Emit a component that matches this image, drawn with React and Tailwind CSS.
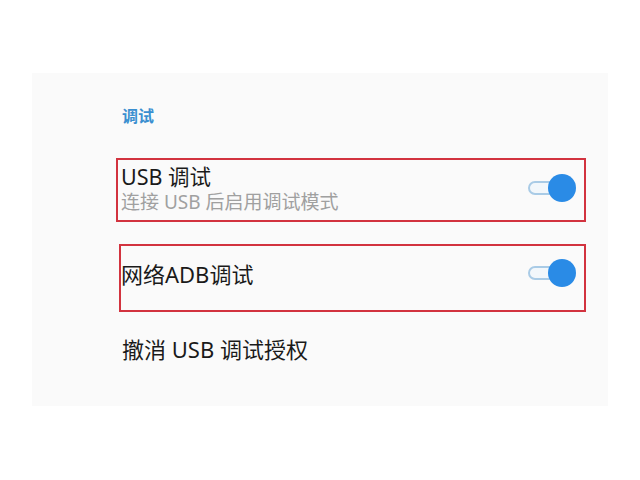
export default function App() {
  const font = { fontFamily: '"Noto Sans", "Noto Sans CJK SC", sans-serif' };
  const Toggle = () => (
    <div className="relative w-[48px] h-[28px] flex items-center">
      <div className="absolute left-[0px] top-[7px] w-[40px] h-[14px] rounded-full border-2 border-[#a9cbe6] bg-[#f2f7fb]" />
      <div className="absolute left-[20px] top-[0px] w-[28px] h-[28px] rounded-full bg-[#2a8be6]" />
    </div>
  );
  return (
    <div className="w-[640px] h-[480px] bg-white" style={font}>
      <div className="h-[73px]" />
      <div className="ml-[32px] w-[576px] h-[333px] bg-[#fafafa] flex flex-col">
        <div className="ml-[90px] mt-[33px] text-[16px] leading-[20px] font-bold text-[#3a8fd0]">调试</div>
        <div className="ml-[84px] mt-[32px] w-[470px] h-[64px] border-2 border-[#d2333f] flex items-center pl-[3px] pr-[8px]">
          <div className="flex-1 flex flex-col -mt-[3px]">
            <div className="text-[21.5px] leading-[27px] text-[#1a1a1a]">USB 调试</div>
            <div className="text-[19px] leading-[24px] text-[#a0a0a0]">连接 USB 后启用调试模式</div>
          </div>
          <div className="-mt-[4px]"><Toggle /></div>
        </div>
        <div className="ml-[87px] mt-[22px] w-[467px] h-[68px] border-2 border-[#d2333f] flex items-center pl-[0px] pr-[8px]">
          <div className="flex-1 text-[22px] leading-[28px] text-[#1a1a1a] -mt-[9px]">网络ADB调试</div>
          <div className="-mt-[11px]"><Toggle /></div>
        </div>
        <div className="ml-[90px] mt-[23px] text-[22px] leading-[28px] text-[#1a1a1a]">撤消 USB 调试授权</div>
      </div>
    </div>
  );
}
